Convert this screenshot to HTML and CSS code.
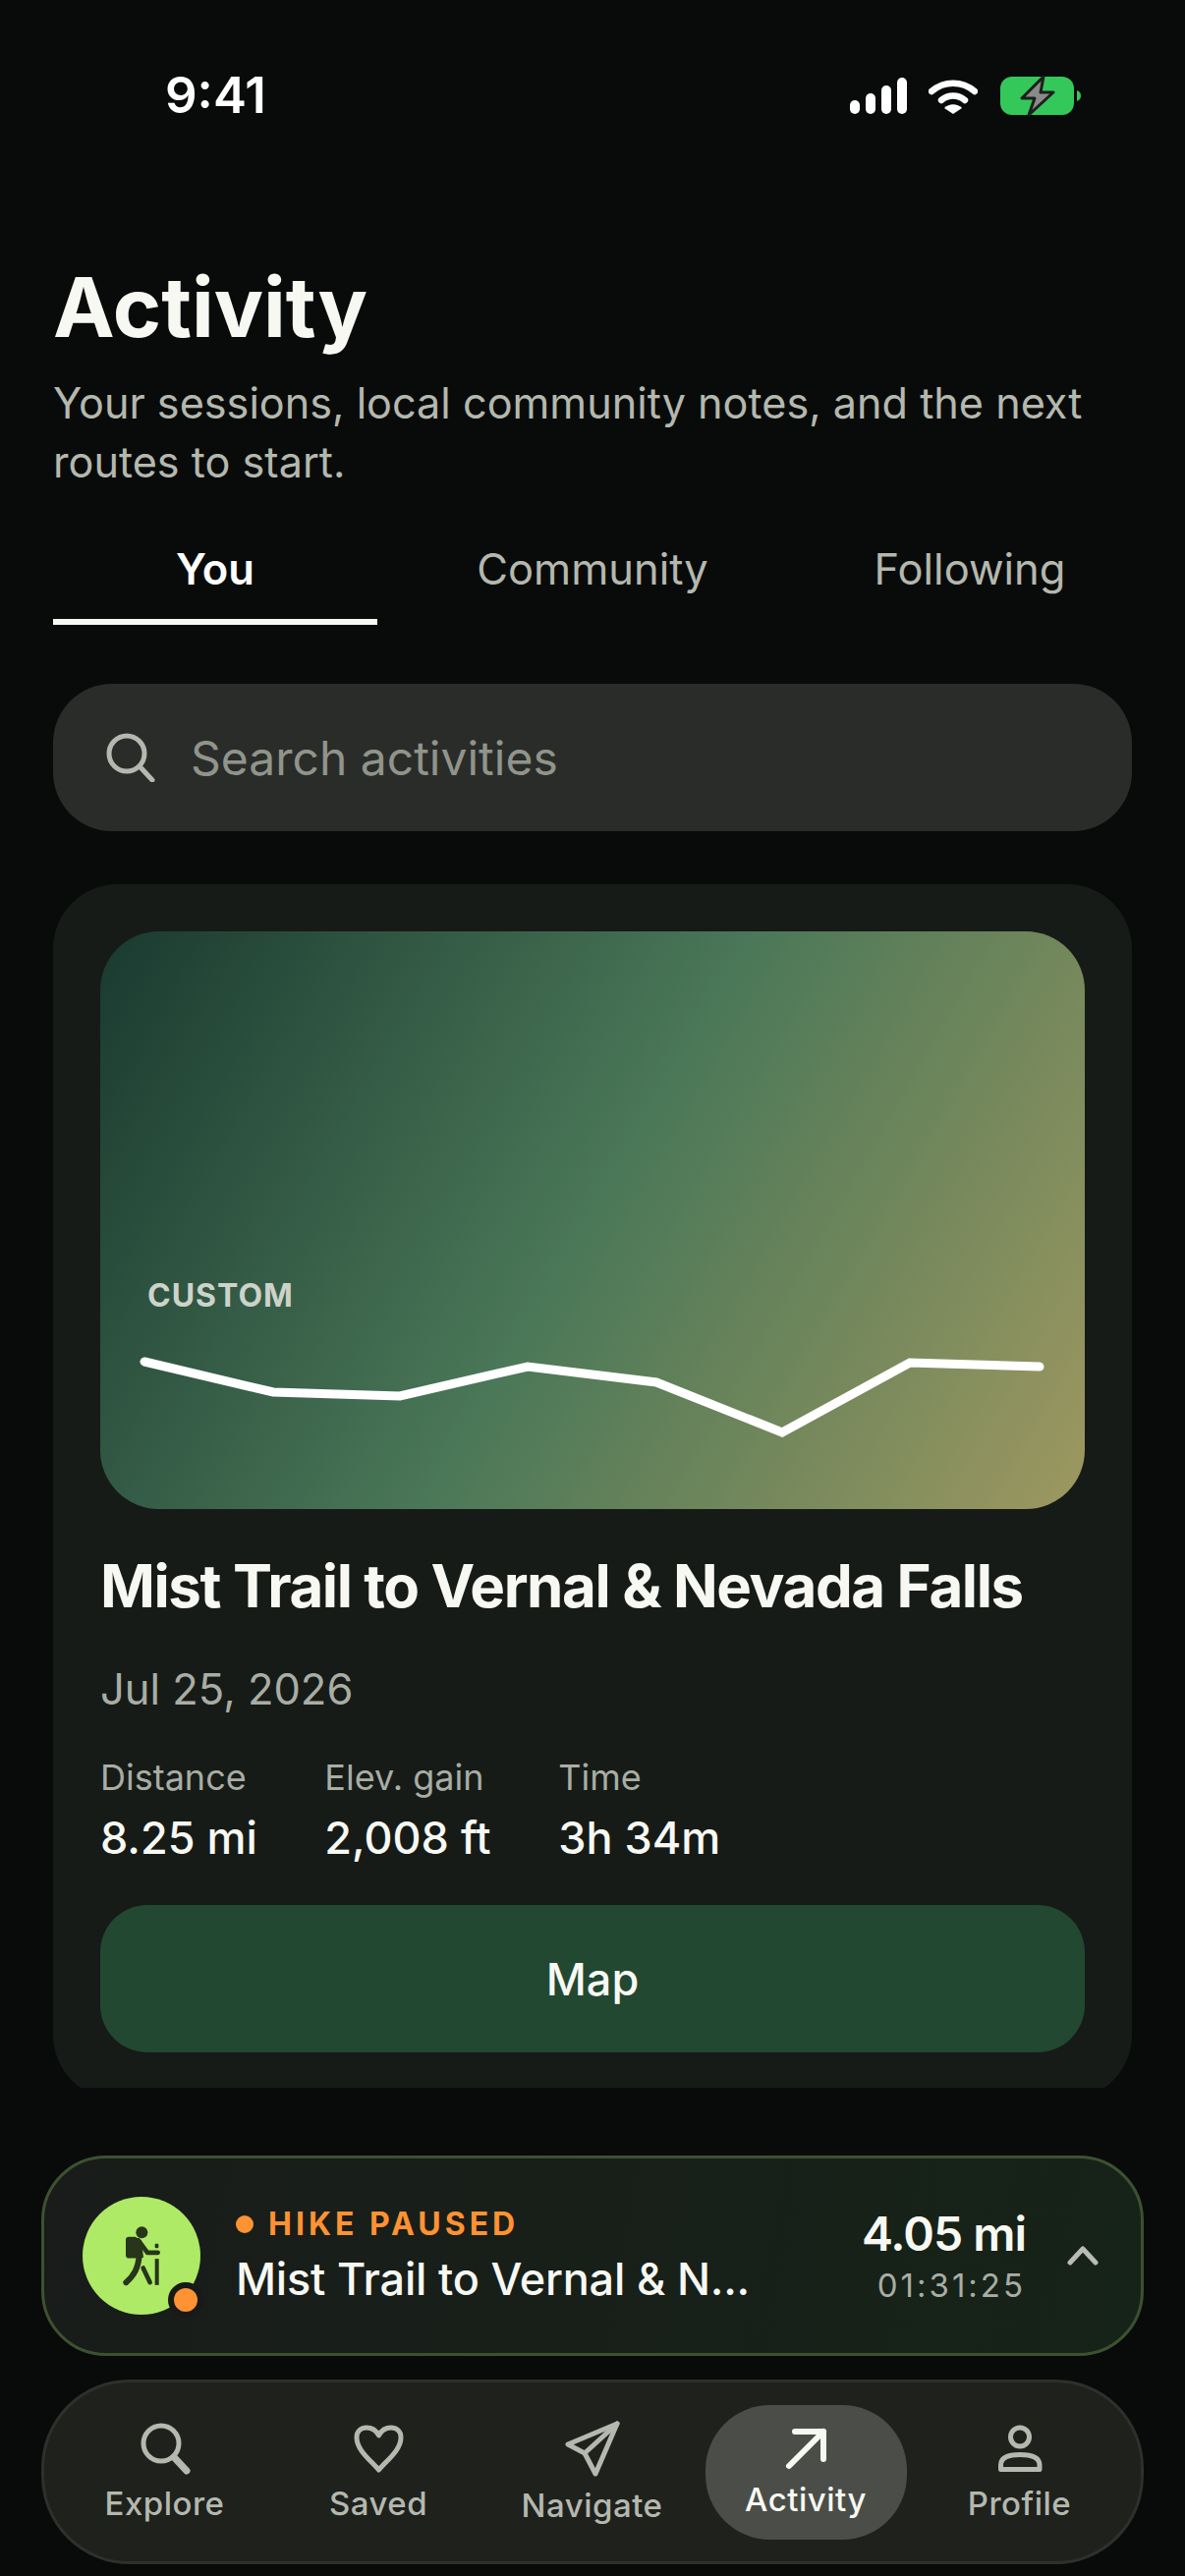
FILE: index.html
```html
<!DOCTYPE html>
<html lang="en">
<head>
    <meta charset="UTF-8">
    <meta name="viewport" content="width=device-width, initial-scale=1.0">
    <title>Activity</title>
    <link rel="stylesheet" href="styles.css">
</head>
<body>

    <div class="screen">
        <!-- Status bar -->
        <div class="status-bar">
            <span class="status-time">9:41</span>
            <div class="status-icons">
                <svg class="status-signal" viewBox="0 0 58 37" width="58" height="37">
                    <rect x="0" y="23" width="10" height="14" rx="5"/>
                    <rect x="16" y="16" width="10" height="21" rx="5"/>
                    <rect x="32" y="8" width="10" height="29" rx="5"/>
                    <rect x="48" y="0" width="10" height="37" rx="5"/>
                </svg>
                <svg class="status-wifi" viewBox="0 0 50 37" width="50" height="37">
                    <path d="M3 14C16 3 34 3 47 14" fill="none" stroke="#fff" stroke-width="6.500" stroke-linecap="round"/>
                    <path d="M13 23C20 17 30 17 37 23" fill="none" stroke="#fff" stroke-width="6.500" stroke-linecap="round"/>
                    <path d="M25 37L16 31C21 26 29 26 34 31Z" fill="#fff"/>
                </svg>
                <svg class="status-battery" viewBox="0 0 82 42" width="82" height="42">
                    <rect x="0" y="1" width="75" height="39" rx="12" fill="#34c85a"/>
                    <path d="M78 15C81 16 82 18 82 20.500C82 23 81 25 78 26Z" fill="#34c85a"/>
                    <path d="M44 1L22 23H35L29 40L54 17H41Z" fill="#8a8a8a" stroke="#1c1f1c" stroke-width="3" stroke-linejoin="round"/>
                </svg>
            </div>
        </div>

        <!-- Header -->
        <h1 class="page-title">Activity</h1>
        <p class="page-sub">Your sessions, local community notes, and the next routes to start.</p>

        <div class="tabs">
            <div class="tab tab-active">You</div>
            <div class="tab">Community</div>
            <div class="tab">Following</div>
        </div>

        <div class="search">
            <svg class="search-icon" viewBox="0 0 50 50" width="50" height="50">
                <circle cx="21" cy="21" r="18"/>
                <path d="M34 34L47 48"/>
            </svg>
            <span class="search-text">Search activities</span>
        </div>

        <div class="feed">
            <div class="card">
                <div class="hero">
                    <div class="hero-tag">CUSTOM</div>
                    <svg class="hero-line" viewBox="0 0 1001 120" width="1001" height="120">
                        <polyline points="45,22 176,53 305,57 435,27 566,43 694,94 824,23 956,27"/>
                    </svg>
                </div>
                <h2 class="card-title">Mist Trail to Vernal &amp; Nevada Falls</h2>
                <div class="card-date">Jul 25, 2026</div>
                <div class="stats">
                    <div class="stat">
                        <span class="stat-label">Distance</span>
                        <span class="stat-value">8.25 mi</span>
                    </div>
                    <div class="stat">
                        <span class="stat-label">Elev. gain</span>
                        <span class="stat-value">2,008 ft</span>
                    </div>
                    <div class="stat">
                        <span class="stat-label">Time</span>
                        <span class="stat-value">3h 34m</span>
                    </div>
                </div>
                <button class="map-button">Map</button>
            </div>
        </div>

        <!-- Paused hike -->
        <div class="hike-bar">
            <div class="hike-avatar">
                <svg viewBox="190 130 120 185" width="40" height="62">
                    <circle cx="251" cy="151" r="18"/>
                    <rect x="202" y="165" width="36" height="65" rx="10"/>
                    <path d="M226 168L250 176L256 228L240 232Z"/>
                    <path class="hiker-stroke" d="M240 175L268 213H300"/>
                    <path class="hiker-stroke hiker-leg" d="M243 222C240 260 228 282 203 304"/>
                    <path class="hiker-stroke" d="M255 260L276 304"/>
                    <rect x="291" y="232" width="12" height="80"/>
                    <rect x="291" y="186" width="11" height="13" rx="3"/>
                </svg>
                <span class="hike-avatar-dot"></span>
            </div>
            <div class="hike-info">
                <div class="hike-status"><span class="hike-dot"></span>HIKE PAUSED</div>
                <div class="hike-name">Mist Trail to Vernal &amp; N...</div>
            </div>
            <div class="hike-metrics">
                <div class="hike-distance">4.05 mi</div>
                <div class="hike-time">01:31:25</div>
            </div>
            <svg class="hike-chevron" viewBox="0 0 32 20" width="32" height="20">
                <path d="M3 17L16 3L29 17"/>
            </svg>
        </div>

        <!-- Bottom nav -->
        <nav class="nav">
            <div class="nav-item">
                <svg viewBox="0 0 64 64" width="64" height="64">
                    <circle cx="28" cy="26" r="18"/>
                    <path d="M41 40L54 54" class="nav-thick"/>
                </svg>
                <span class="nav-label">Explore</span>
            </div>
            <div class="nav-item">
                <svg viewBox="0 0 64 64" width="64" height="64">
                    <path d="M32.500 53C24 43 10 33 10 20C10 13 15 10 20 10C26 10 30 13 32.500 18C35 13 39 10 45 10C50 10 55 13 55 20C55 33 41 43 32.500 53Z"/>
                </svg>
                <span class="nav-label">Saved</span>
            </div>
            <div class="nav-item nav-item-low">
                <svg viewBox="0 0 64 64" width="64" height="64">
                    <path d="M57 6L7 27L24 36L35 57Z"/>
                    <path d="M24 36L57 6"/>
                </svg>
                <span class="nav-label">Navigate</span>
            </div>
            <div class="nav-item nav-item-active">
                <svg viewBox="0 0 64 64" width="64" height="64">
                    <path d="M21 14H50V42"/>
                    <path d="M15 49L50 14"/>
                </svg>
                <span class="nav-label">Activity</span>
            </div>
            <div class="nav-item">
                <svg viewBox="0 0 64 64" width="64" height="64">
                    <circle cx="32" cy="19.500" r="9.500"/>
                    <path d="M12.500 52.500V48C12.500 40 21 37.500 32 37.500C43 37.500 52 40 52 48V52.500Z"/>
                </svg>
                <span class="nav-label">Profile</span>
            </div>
        </nav>
    </div>

</body>
</html>
```

FILE: styles.css
```css
* {
    box-sizing: border-box;
    margin: 0;
    padding: 0;
}

body {
    font-family: Inter, "Liberation Sans", sans-serif;
    background-color: #090b0a;
    color: #f7f8f2;
    overflow: hidden;
}

.screen {
    width: 1206px;
    height: 2622px;
    display: flex;
    flex-direction: column;
    padding: 0 54px;
}

/* Status bar */
.status-bar {
    display: flex;
    justify-content: space-between;
    align-items: flex-start;
    height: 258px;
    padding: 68px 52px 0 114px;
    flex-shrink: 0;
}

.status-time {
    font-size: 51px;
    line-height: 58px;
    font-weight: 600;
    color: #fff;
}

.status-icons {
    display: flex;
    align-items: flex-start;
    gap: 22px;
    padding-top: 11px;
}

.status-signal {
    fill: #fff;
}

.status-battery {
    margin-left: 1px;
    margin-top: -2px;
}

/* Header */
.page-title {
    font-size: 84px;
    line-height: 100px;
    font-weight: 700;
    margin-top: 5px;
}

.page-sub {
    font-size: 43.2px;
    line-height: 60px;
    color: #b4b8ae;
    margin-top: 17px;
}

.tabs {
    display: grid;
    grid-template-columns: repeat(3, 330px);
    gap: 54px;
    margin-top: 49px;
}

.tab {
    font-size: 43.5px;
    line-height: 60px;
    text-align: center;
    color: #b4b8ae;
    padding-bottom: 21px;
    border-bottom: 6px solid transparent;
}

.tab-active {
    color: #fff;
    font-weight: 600;
    border-bottom-color: #f7f8f2;
}

.search {
    display: flex;
    align-items: center;
    height: 150px;
    margin-top: 60px;
    padding: 0 54px;
    background-color: #2a2c29;
    border-radius: 60px;
    gap: 36px;
    flex-shrink: 0;
}

.search-icon {
    fill: none;
    stroke: #b4b8ae;
    stroke-width: 5;
    stroke-linecap: round;
    flex-shrink: 0;
}

.search-text {
    font-size: 48px;
    color: #90948b;
}

/* Feed */
.feed {
    height: 1225px;
    margin-top: 54px;
    overflow: hidden;
    flex-shrink: 0;
}

.card {
    background-color: #161b18;
    border-radius: 66px;
    padding: 48px;
}

.hero {
    height: 588px;
    border-radius: 60px;
    background: linear-gradient(120deg, #1a3a30 0%, #4b7858 50%, #9e9860 100%);
    display: flex;
    flex-direction: column;
    justify-content: flex-end;
    padding-bottom: 52px;
}

.hero-tag {
    font-size: 32px;
    font-weight: 700;
    letter-spacing: 1px;
    line-height: 40px;
    color: #cdd3c9;
    padding-left: 48px;
    margin-bottom: 25px;
}

.hero-line {
    fill: none;
    stroke: #fff;
    stroke-width: 9;
    stroke-linecap: round;
    stroke-linejoin: miter;
    display: block;
}

.card-title {
    font-size: 60px;
    line-height: 72px;
    font-weight: 700;
    letter-spacing: -1.4px;
    margin-top: 42px;
}

.card-date {
    font-size: 43.5px;
    line-height: 56px;
    color: #a9ada4;
    margin-top: 41px;
}

.stats {
    display: flex;
    gap: 68.5px;
    margin-top: 39px;
}

.stat {
    display: flex;
    flex-direction: column;
}

.stat-label {
    font-size: 36px;
    line-height: 46px;
    color: #a9ada4;
}

.stat-value {
    font-size: 45px;
    line-height: 56px;
    font-weight: 500;
    margin-top: 11px;
}

.map-button {
    display: block;
    width: 100%;
    height: 150px;
    margin-top: 40px;
    border: none;
    border-radius: 48px;
    background-color: #224832;
    color: #f7f8f2;
    font-family: inherit;
    font-size: 45px;
    font-weight: 500;
}

/* Paused hike */
.hike-bar {
    display: flex;
    align-items: center;
    width: 1122px;
    height: 204px;
    margin: 69px 0 0 -12px;
    padding: 0 39px;
    border: 3px solid #3d5130;
    border-radius: 66px;
    background: linear-gradient(100deg, #191c1a, #162318);
    flex-shrink: 0;
}

.hike-avatar {
    position: relative;
    display: flex;
    align-items: center;
    justify-content: center;
    width: 120px;
    height: 120px;
    border-radius: 50%;
    background-color: #aeea66;
    flex-shrink: 0;
    fill: #27351a;
}

.hiker-stroke {
    fill: none;
    stroke: #27351a;
    stroke-width: 14;
    stroke-linecap: round;
    stroke-linejoin: round;
}

.hiker-leg {
    stroke-width: 18;
}

.hike-avatar-dot {
    position: absolute;
    right: -3px;
    bottom: -3px;
    width: 36px;
    height: 36px;
    border-radius: 50%;
    background-color: #ff9232;
    border: 6px solid #171a18;
}

.hike-info {
    flex: 1;
    margin-left: 36px;
    min-width: 0;
}

.hike-status {
    display: flex;
    align-items: center;
    font-size: 32px;
    line-height: 40px;
    font-weight: 700;
    letter-spacing: 4px;
    color: #ff9232;
}

.hike-dot {
    width: 18px;
    height: 18px;
    border-radius: 50%;
    background-color: #ff9232;
    margin-right: 15px;
}

.hike-name {
    font-size: 45px;
    line-height: 56px;
    font-weight: 500;
    letter-spacing: -0.2px;
    margin-top: 8px;
    white-space: nowrap;
}

.hike-metrics {
    text-align: right;
}

.hike-distance {
    font-size: 48px;
    line-height: 56px;
    font-weight: 600;
    letter-spacing: -1px;
}

.hike-time {
    font-size: 33px;
    line-height: 40px;
    letter-spacing: 3px;
    color: #a9ada4;
    margin-top: 4px;
}

.hike-chevron {
    fill: none;
    stroke: #b8bcb4;
    stroke-width: 5;
    stroke-linecap: round;
    stroke-linejoin: round;
    margin-left: 42px;
    margin-right: 4px;
}

/* Bottom nav */
.nav {
    display: grid;
    grid-template-columns: repeat(5, 205px);
    gap: 12.5px;
    align-items: center;
    width: 1122px;
    height: 188px;
    margin: 24px 0 0 -12px;
    padding: 0 20px;
    background-color: #1f211d;
    border: 3px solid #2e302c;
    border-radius: 90px;
    flex-shrink: 0;
}

.nav-item {
    display: flex;
    flex-direction: column;
    align-items: center;
    height: 137px;
    padding-top: 13px;
    border-radius: 66px;
    color: #b4b8ae;
}

.nav-item svg {
    fill: none;
    stroke: #b4b8ae;
    stroke-width: 5;
    stroke-linecap: round;
    stroke-linejoin: round;
    flex-shrink: 0;
}

.nav-thick {
    stroke-width: 7;
}

.nav-label {
    font-size: 33px;
    line-height: 40px;
    font-weight: 500;
    margin-top: 3px;
    letter-spacing: 0.5px;
}

.nav-item-low .nav-label {
    margin-top: 5px;
}

.nav-item-active {
    background-color: #4b4e48;
    color: #f7f8f2;
}

.nav-item-active svg {
    stroke: #f7f8f2;
    stroke-width: 6;
}

.nav-item-active .nav-label {
    margin-top: -1px;
}
```
